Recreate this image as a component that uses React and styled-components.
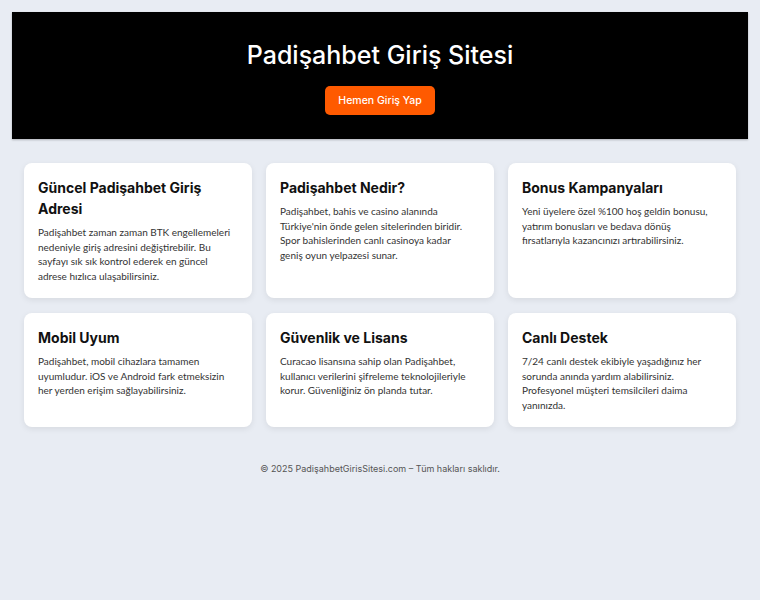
import styled, { createGlobalStyle } from "styled-components";

const GlobalStyle = createGlobalStyle`
  body {
    margin: 0;
    padding: 12px;
    background: #e8ecf3;
    font-family: Inter, "Noto Sans", sans-serif;
  }
`;

const Hero = styled.header`
  background: #000;
  height: 127px;
  box-sizing: border-box;
  padding-top: 26px;
  text-align: center;
  box-shadow: 0 1px 2px rgba(0, 0, 0, 0.25);
`;

const Title = styled.h1`
  margin: 0;
  color: #fff;
  font-size: 25px;
  font-weight: 500;
  line-height: 34px;
`;

const CtaButton = styled.a`
  display: inline-block;
  margin-top: 14px;
  background: #ff5a00;
  color: #fff;
  font-size: 10.5px;
  font-weight: 500;
  height: 29px;
  line-height: 29px;
  padding: 0 13px;
  border-radius: 5px;
  text-decoration: none;
`;

const Grid = styled.main`
  display: grid;
  grid-template-columns: repeat(3, 1fr);
  gap: 15px 14px;
  padding: 24px 12px 0;
`;

const Card = styled.section`
  background: #fff;
  border-radius: 8px;
  padding: 14px 19px 15px 14px;
  box-shadow: 0 2px 6px rgba(0, 0, 0, 0.08);
`;

const CardTitle = styled.h2`
  margin: 0 0 6px;
  color: #111;
  font-size: 14px;
  font-weight: 700;
  line-height: 21px;
`;

const CardText = styled.p`
  margin: 0;
  color: #333;
  font-family: Lato, "Noto Sans", sans-serif;
  font-size: 10px;
  line-height: 14.5px;
`;

const Footer = styled.footer`
  text-align: center;
  color: #555;
  font-size: 9px;
  padding-top: 36px;
`;

const cards = [
  {
    title: "Güncel Padişahbet Giriş Adresi",
    text: "Padişahbet zaman zaman BTK engellemeleri nedeniyle giriş adresini değiştirebilir. Bu sayfayı sık sık kontrol ederek en güncel adrese hızlıca ulaşabilirsiniz.",
  },
  {
    title: "Padişahbet Nedir?",
    text: "Padişahbet, bahis ve casino alanında Türkiye'nin önde gelen sitelerinden biridir. Spor bahislerinden canlı casinoya kadar geniş oyun yelpazesi sunar.",
  },
  {
    title: "Bonus Kampanyaları",
    text: "Yeni üyelere özel %100 hoş geldin bonusu, yatırım bonusları ve bedava dönüş fırsatlarıyla kazancınızı artırabilirsiniz.",
  },
  {
    title: "Mobil Uyum",
    text: "Padişahbet, mobil cihazlara tamamen uyumludur. iOS ve Android fark etmeksizin her yerden erişim sağlayabilirsiniz.",
  },
  {
    title: "Güvenlik ve Lisans",
    text: "Curacao lisansına sahip olan Padişahbet, kullanıcı verilerini şifreleme teknolojileriyle korur. Güvenliğiniz ön planda tutar.",
  },
  {
    title: "Canlı Destek",
    text: "7/24 canlı destek ekibiyle yaşadığınız her sorunda anında yardım alabilirsiniz. Profesyonel müşteri temsilcileri daima yanınızda.",
  },
];

const App = () => {
  return (
    <>
      <GlobalStyle />
      <Hero>
        <Title>Padişahbet Giriş Sitesi</Title>
        <CtaButton href="#">Hemen Giriş Yap</CtaButton>
      </Hero>
      <Grid>
        {cards.map((c) => (
          <Card key={c.title}>
            <CardTitle>{c.title}</CardTitle>
            <CardText>{c.text}</CardText>
          </Card>
        ))}
      </Grid>
      <Footer>© 2025 PadişahbetGirisSitesi.com – Tüm hakları saklıdır.</Footer>
    </>
  );
};

export default App;
